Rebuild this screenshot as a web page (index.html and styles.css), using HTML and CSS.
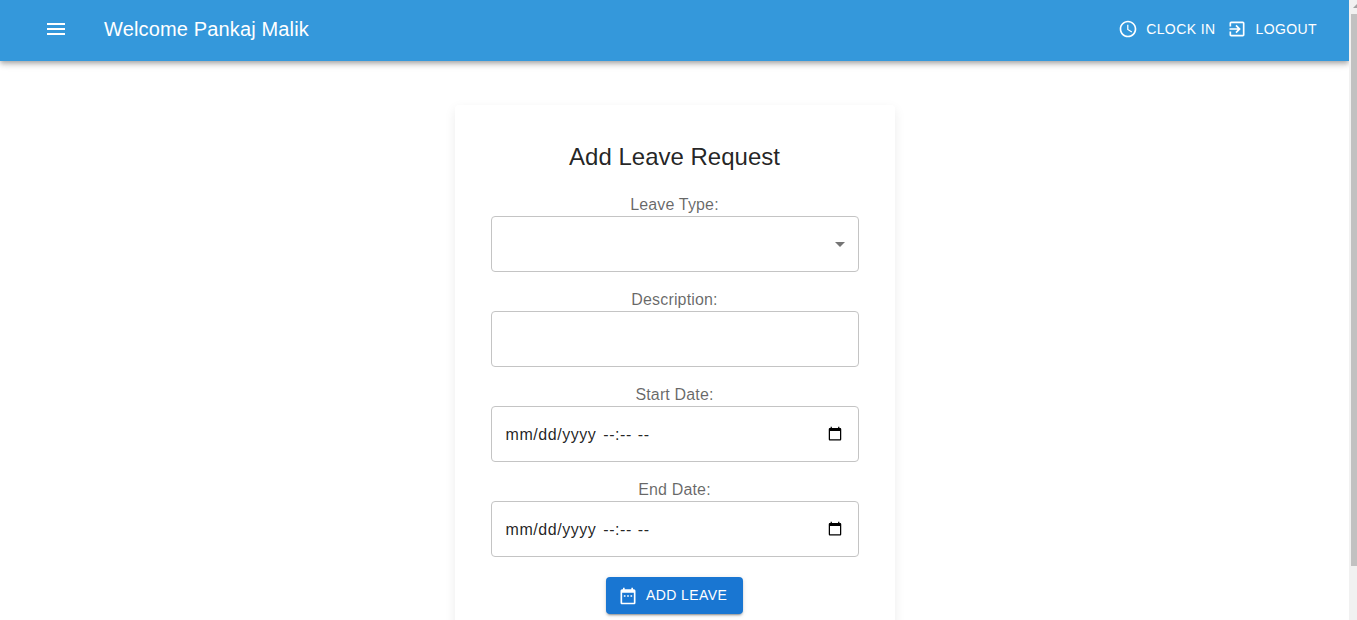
FILE: index.html
```html
<!DOCTYPE html>
<html lang="en">
<head>
<meta charset="utf-8">
<title>Add Leave Request</title>
<link rel="stylesheet" href="styles.css">
</head>
<body>
<div class="page">
  <header class="appbar">
    <svg class="menu-icon" viewBox="0 0 24 24"><path d="M3 18h18v-2H3zm0-5h18v-2H3zm0-7v2h18V6z"/></svg>
    <div class="welcome"><span>Welcome Pankaj Malik</span></div>
    <div class="action">
      <svg class="action-icon" viewBox="0 0 24 24"><path d="M11.99 2C6.47 2 2 6.48 2 12s4.47 10 9.99 10C17.52 22 22 17.52 22 12S17.52 2 11.99 2M12 20c-4.42 0-8-3.58-8-8s3.58-8 8-8 8 3.580 8 8-3.580 8-8 8m.5-13H11v6l5.250 3.150.75-1.230-4.500-2.670z"/></svg>
      <span>CLOCK IN</span>
    </div>
    <div class="action">
      <svg class="action-icon" viewBox="0 0 24 24"><path d="M10.090 15.590 11.500 17l5-5-5-5-1.410 1.410L12.670 11H3v2h9.670zM19 3H5c-1.110 0-2 .9-2 2v4h2V5h14v14H5v-4H3v4c0 1.100.89 2 2 2h14c1.100 0 2-.9 2-2V5c0-1.100-.9-2-2-2"/></svg>
      <span>LOGOUT</span>
    </div>
  </header>
  <main class="content">
    <section class="card">
      <h1 class="title"><span>Add Leave Request</span></h1>
      <div class="field">
        <label class="label">Leave Type:</label>
        <div class="control select"><svg class="arrow" viewBox="0 0 24 24"><path d="m7 10 5 5 5-5z"/></svg></div>
      </div>
      <div class="field">
        <label class="label">Description:</label>
        <div class="control"></div>
      </div>
      <div class="field">
        <label class="label">Start Date:</label>
        <div class="control date"><span class="day">mm/dd/yyyy</span><span class="time">--:--</span><span class="time">--</span><svg class="calendar" viewBox="0 0 24 24"><path d="M20 3h-1V1h-2v2H7V1H5v2H4c-1.100 0-2 .9-2 2v16c0 1.100.9 2 2 2h16c1.100 0 2-.9 2-2V5c0-1.100-.9-2-2-2zm0 18H4V8h16v13z"/></svg></div>
      </div>
      <div class="field">
        <label class="label">End Date:</label>
        <div class="control date"><span class="day">mm/dd/yyyy</span><span class="time">--:--</span><span class="time">--</span><svg class="calendar" viewBox="0 0 24 24"><path d="M20 3h-1V1h-2v2H7V1H5v2H4c-1.100 0-2 .9-2 2v16c0 1.100.9 2 2 2h16c1.100 0 2-.9 2-2V5c0-1.100-.9-2-2-2zm0 18H4V8h16v13z"/></svg></div>
      </div>
      <button class="submit" type="button">
        <svg class="submit-icon" viewBox="0 0 24 24"><path d="M7 11h2v2H7zm14-5v14c0 1.100-.9 2-2 2H5c-1.110 0-2-.9-2-2l.010-14c0-1.100.88-2 1.990-2h1V2h2v2h8V2h2v2h1c1.100 0 2 .9 2 2M5 8v12h14V8zm10 5h2v-2h-2zm-4 0h2v-2h-2z"/></svg>
        <span class="submit-text">ADD LEAVE</span>
      </button>
    </section>
  </main>
</div>
<div class="scrollbar">
  <svg class="scroll-up" viewBox="0 0 8 14"><path d="M4 8 8 4v4z"/></svg>
  <div class="thumb"></div>
</div>
</body>
</html>
```
FILE: styles.css
```css
* { box-sizing: border-box; }
body {
  margin: 0;
  height: 620px;
  overflow: hidden;
  display: flex;
  background: #fff;
  font-family: "Liberation Sans", Arial, sans-serif;
}
svg { flex: none; fill: currentColor; }
.page { width: 1349px; height: 620px; overflow: hidden; }
.appbar {
  height: 61px;
  padding: 0 32px 3px 44px;
  display: flex;
  align-items: center;
  background: #3498db;
  color: #fff;
  box-shadow: 0 2px 4px -1px rgba(0,0,0,.2), 0 4px 5px rgba(0,0,0,.14), 0 1px 10px rgba(0,0,0,.12);
}
.menu-icon { width: 24px; height: 24px; }
.welcome { flex: 1; padding-left: 36px; font-size: 20px; line-height: 32px; letter-spacing: .15px; }
.action { display: flex; align-items: center; font-size: 14px; line-height: 24px; letter-spacing: .4px; }
.action + .action { margin-left: 12px; }
.action-icon { width: 20px; height: 20px; margin-right: 8px; }
.content { display: flex; justify-content: center; padding-top: 44px; }
.card {
  width: 440px;
  height: 560px;
  padding: 36px;
  display: flex;
  flex-direction: column;
  align-items: center;
  border-radius: 4px;
  box-shadow: 0 4px 12px rgba(0,0,0,.08);
}
.title {
  margin: 0 0 20px;
  font-size: 24px;
  font-weight: 400;
  line-height: 32px;
  color: rgba(0,0,0,.87);
}
.field { width: 368px; margin-bottom: 16px; text-align: center; }
.label {
  display: block;
  height: 23px;
  font-size: 16px;
  line-height: 23px;
  letter-spacing: .15px;
  color: rgba(0,0,0,.6);
}
.control {
  height: 56px;
  display: flex;
  align-items: center;
  border: 1px solid #c4c4c4;
  border-radius: 4px;
  color: rgba(0,0,0,.87);
}
.select { justify-content: flex-end; padding-right: 6px; }
.arrow { width: 24px; height: 24px; color: #757575; }
.date { padding: 0 15px 0 14px; font-size: 16px; letter-spacing: .55px; }
.day { padding-top: 1px; margin-right: 7px; }
.time { padding-top: 2px; margin-right: 6px; }
.calendar { width: 16px; height: 15px; margin: 0 0 1px auto; color: #000; }
.submit {
  height: 37px;
  width: 137px;
  margin: 4px 0 0;
  padding: 0 0 0 12px;
  flex: none;
  display: flex;
  align-items: center;
  border: 0;
  border-radius: 4px;
  background: #1976d2;
  color: #fff;
  font: 14px/24px "Liberation Sans", Arial, sans-serif;
  letter-spacing: .4px;
  box-shadow: 0 3px 1px -2px rgba(0,0,0,.2), 0 2px 2px rgba(0,0,0,.14), 0 1px 5px rgba(0,0,0,.12);
}
.submit-icon { width: 20px; height: 20px; margin-right: 8px; }
.submit-text { padding-bottom: 2px; }
.scrollbar { width: 8px; height: 620px; background: #f1f1f1; }
.scroll-up { display: block; width: 8px; height: 14px; color: #a3a3a3; }
.thumb { height: 552px; margin-left: 2px; background: #c1c1c1; }
```
